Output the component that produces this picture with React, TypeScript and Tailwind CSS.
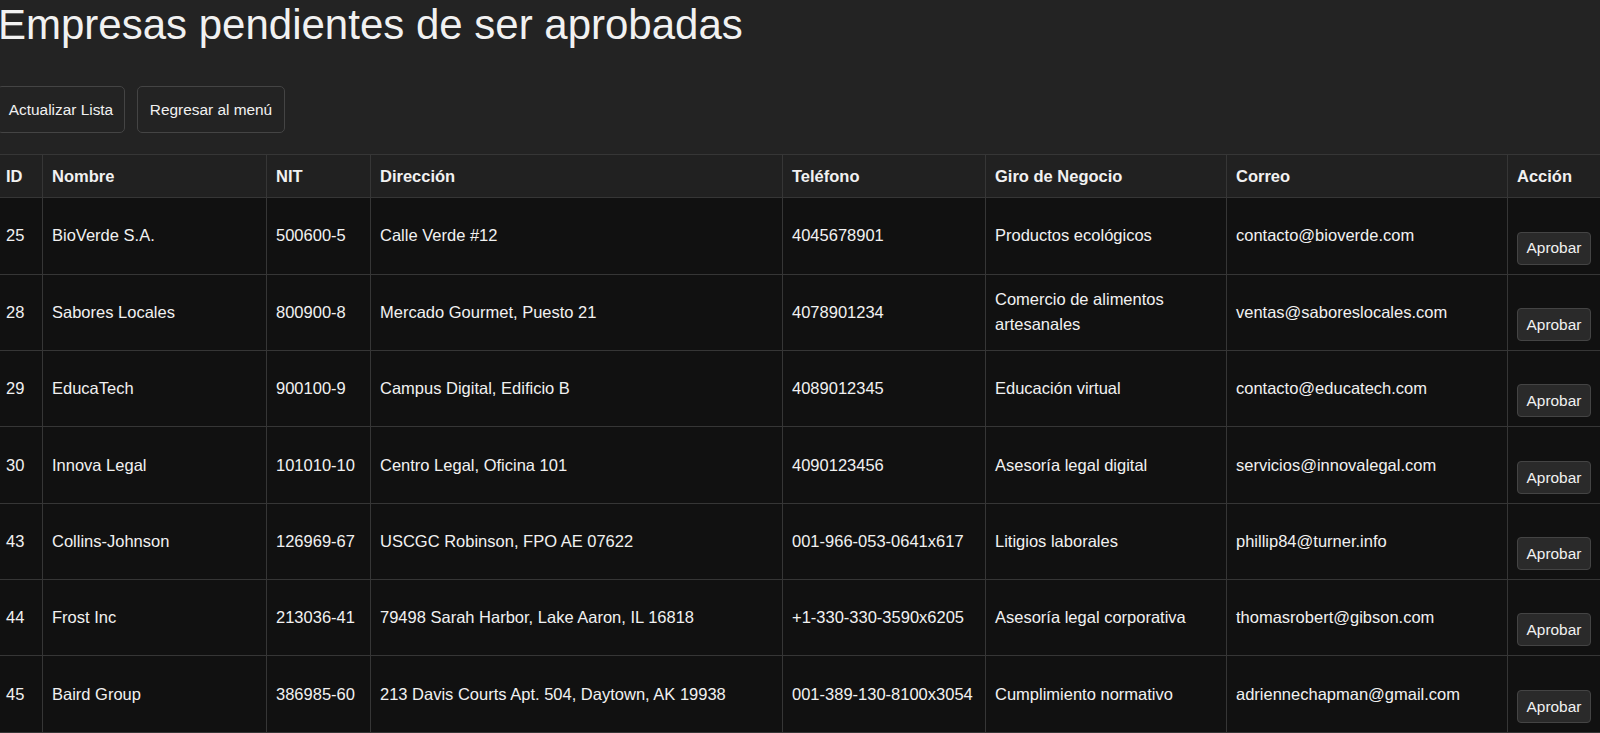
import React from 'react';

interface Empresa {
  id: number;
  nombre: string;
  nit: string;
  direccion: string;
  telefono: string;
  giro: string;
  correo: string;
}

const EMPRESAS: Empresa[] = [
  { id: 25, nombre: 'BioVerde S.A.', nit: '500600-5', direccion: 'Calle Verde #12', telefono: '4045678901', giro: 'Productos ecológicos', correo: 'contacto@bioverde.com' },
  { id: 28, nombre: 'Sabores Locales', nit: '800900-8', direccion: 'Mercado Gourmet, Puesto 21', telefono: '4078901234', giro: 'Comercio de alimentos artesanales', correo: 'ventas@saboreslocales.com' },
  { id: 29, nombre: 'EducaTech', nit: '900100-9', direccion: 'Campus Digital, Edificio B', telefono: '4089012345', giro: 'Educación virtual', correo: 'contacto@educatech.com' },
  { id: 30, nombre: 'Innova Legal', nit: '101010-10', direccion: 'Centro Legal, Oficina 101', telefono: '4090123456', giro: 'Asesoría legal digital', correo: 'servicios@innovalegal.com' },
  { id: 43, nombre: 'Collins-Johnson', nit: '126969-67', direccion: 'USCGC Robinson, FPO AE 07622', telefono: '001-966-053-0641x617', giro: 'Litigios laborales', correo: 'phillip84@turner.info' },
  { id: 44, nombre: 'Frost Inc', nit: '213036-41', direccion: '79498 Sarah Harbor, Lake Aaron, IL 16818', telefono: '+1-330-330-3590x6205', giro: 'Asesoría legal corporativa', correo: 'thomasrobert@gibson.com' },
  { id: 45, nombre: 'Baird Group', nit: '386985-60', direccion: '213 Davis Courts Apt. 504, Daytown, AK 19938', telefono: '001-389-130-8100x3054', giro: 'Cumplimiento normativo', correo: 'adriennechapman@gmail.com' },
];

const HEADERS = ['ID', 'Nombre', 'NIT', 'Dirección', 'Teléfono', 'Giro de Negocio', 'Correo', 'Acción'];
const WIDTHS = [46, 224, 104, 412, 203, 241, 281, 94];

const cell = 'border border-[#363636] px-[9px] py-[9px] align-middle';
const headCell = 'border border-[#363636] px-[9px] py-[8.5px] align-middle text-left font-bold';

export default function App() {
  return (
    <div className="min-h-screen w-full overflow-hidden bg-[#232323] text-[#f1f1f1] font-['Liberation_Sans',Arial,sans-serif]">
      <div className="-ml-[4px] w-[1605px]">
        <h1 className="pl-[2px] text-[42px] leading-[1.2] font-normal">
          Empresas pendientes de ser aprobadas
        </h1>

        <div className="mt-[36px] flex gap-[12px] pl-[1px]">
          <button className="h-[47px] w-[128px] rounded-[5px] border border-[#444] bg-[#232323] text-[15.4px] text-[#f1f1f1]">
            Actualizar Lista
          </button>
          <button className="h-[47px] w-[148px] rounded-[5px] border border-[#444] bg-[#232323] text-[15.4px] text-[#f1f1f1]">
            Regresar al menú
          </button>
        </div>

        <table className="mt-[21px] w-[1605px] table-fixed border-collapse text-[16.5px] leading-[1.5]">
          <colgroup>
            {WIDTHS.map((w, i) => (
              <col key={i} style={{ width: w }} />
            ))}
          </colgroup>
          <thead>
            <tr className="bg-[#212121]">
              {HEADERS.map((h) => (
                <th key={h} className={headCell}>
                  {h}
                </th>
              ))}
            </tr>
          </thead>
          <tbody className="bg-[#111111]">
            {EMPRESAS.map((e) => (
              <tr key={e.id}>
                <td className={cell}>{e.id}</td>
                <td className={cell}>{e.nombre}</td>
                <td className={cell}>{e.nit}</td>
                <td className={cell}>{e.direccion}</td>
                <td className={cell}>{e.telefono}</td>
                <td className={cell}>{e.giro}</td>
                <td className={cell}>{e.correo}</td>
                <td className={cell}>
                  <div className="h-[24.4px]" />
                  <button className="block h-[33px] w-[74px] rounded-[4px] border border-[#444] bg-[#2a2a2a] text-[15.4px] text-[#f1f1f1]">
                    Aprobar
                  </button>
                </td>
              </tr>
            ))}
          </tbody>
        </table>
      </div>
    </div>
  );
}
